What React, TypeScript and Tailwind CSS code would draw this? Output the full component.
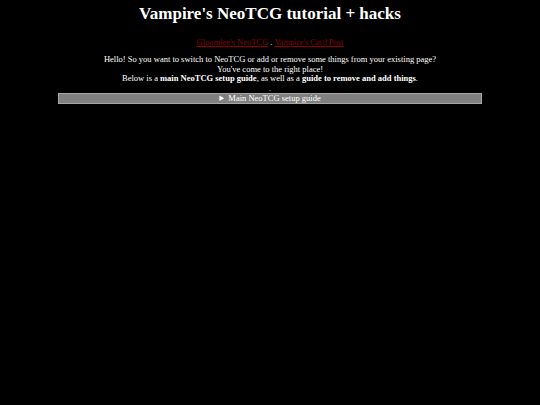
export default function App() {
  return (
    <div className="min-h-[405px] w-full bg-black text-white text-center" style={{ fontFamily: '"Liberation Serif", "Times New Roman", serif' }}>
      <h1 className="pt-[3px] text-[17px] font-bold leading-[22px]">Vampire's NeoTCG tutorial + hacks</h1>
      <div className="mt-[12px] text-[8.5px] leading-[10px]">
        <a href="#" className="text-[#8b0000] underline">Gloomlee's NeoTCG</a>
        <span> . </span>
        <a href="#" className="text-[#8b0000] underline">Vampire's Card Post</a>
      </div>
      <p className="mt-[8px] text-[8.5px] leading-[9.5px]">
        Hello! So you want to switch to NeoTCG or add or remove some things from your existing page?
        <br />
        You've come to the right place!
        <br />
        Below is a <b>main NeoTCG setup guide</b>, as well as a <b>guide to remove and add things</b>.
      </p>
      <div className="h-[9px] pt-[3px] text-[6px] leading-[5px]">.</div>
      <details className="mx-[58px]">
        <summary className="h-[11px] border border-[#a6a6a6] bg-[#808080] text-[8.5px] leading-[9px] text-white cursor-pointer">
          Main NeoTCG setup guide
        </summary>
      </details>
    </div>
  );
}
